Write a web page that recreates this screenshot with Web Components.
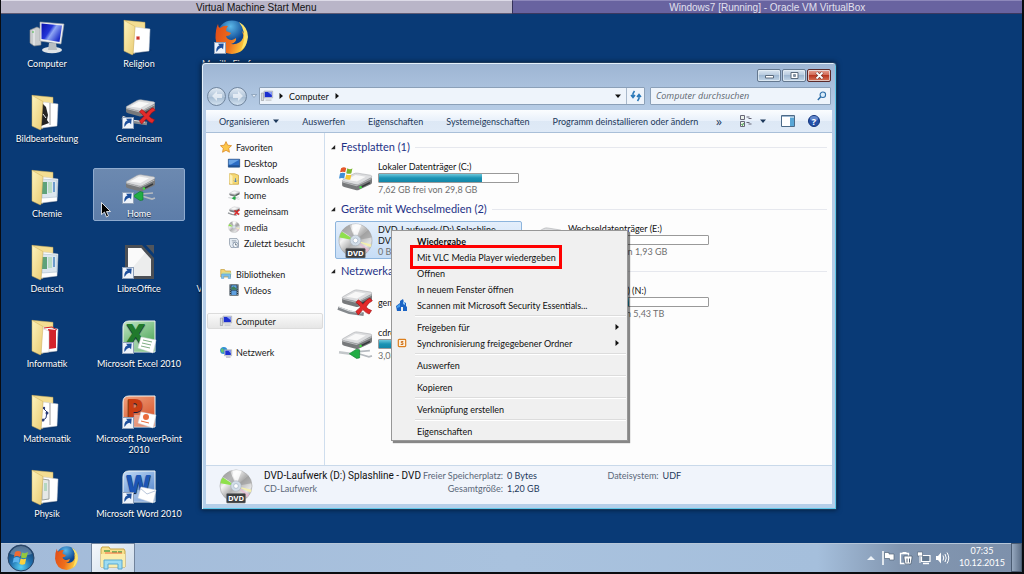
<!DOCTYPE html>
<html lang="de">
<head>
<meta charset="utf-8">
<title>Windows7 [Running] - Oracle VM VirtualBox</title>
<style>
  html, body { margin: 0; min-height: 100%; background: #0a0c10; }
  body { font: 9px/11px Lato, "Open Sans", sans-serif; color: #111; }
</style>
</head>
<body>
<vm-screen></vm-screen>

<script>
const SHORTCUT = `<rect x=".5" y="22.500" width="11" height="11" fill="#eef3fa" stroke="#8fa0b8"/>
  <path d="M2.500 32c-.6-3.500.8-6 3-6.500L4 23.800l5.700-.3-.6 5.700-1.600-1.500c-2 .4-3.500 1.800-5 4.300z" fill="#1d4f9c"/>`;
const folder = inner => `<svg viewBox="0 0 34 34">
  <defs><linearGradient id="f" x2="1" y2="1"><stop offset="0" stop-color="#fdf3bd"/><stop offset="1" stop-color="#e9cb72"/></linearGradient></defs>
  <path d="M20 27l10 3-6 3-10 1z" fill="#052a5c" opacity=".5"/>
  <path d="M2 .3l21 2V8L12 34z" fill="#f3dd92" stroke="#c9ab58" stroke-width=".5"/>
  <path d="M13 7l15 2-1 22-16 2z" fill="#fff" stroke="#c8ccd2" stroke-width=".5"/>${inner}
  <path d="M2 .3L13 6.500 11 34.500l-1 .3L2 31z" fill="url(#f)" stroke="#cfae58" stroke-width=".5"/></svg>`;
const driveBody = `<path d="M4 13v3.500q0 1.200 2 1.700l11 3q2 .5 3.500-.3l11-5q1.500-.8 1.500-2V9z" fill="#77797b"/>
  <path d="M4.500 11.500L15 5.500q2-1 4-.7l12.500 2q2.500.7.7 2.200L20.500 15.500q-1.500.8-3.500.4L5 13q-1.700-.6-.5-1.500z" fill="#dcdddf" stroke="#a0a3a6" stroke-width=".5"/>
  <path d="M8 11.500l9-5 10 1.800-8.500 4.700z" fill="#f8f8f8"/><path d="M4.500 13.500l13.500 3.500 14.500-7" stroke="#b9bbbd" fill="none"/><path d="M22 18.500l9-4.500" stroke="#36393c" stroke-width="1.500"/><circle cx="22" cy="18.500" r="1.200" fill="#3fdc3f"/>`;
const redX = `<g transform="translate(9 5) scale(.76 .86)"><path d="M14 11q3 1 6 5 5-6 9-7l3 3q-5 2-8 7 3 3 7 4l-3 4q-4-1-8-5-3 3-6 6l-3-4q3-2 6-5-3-4-6-5z" fill="#e32a2a" stroke="#9e0f14" stroke-width=".8"/></g>`;
const greenCable = `<path d="M1 24.500l11 1.500" stroke="#c3c7ca" stroke-width="2.500"/><path d="M20 26l10 3 3-1M20 24l11-1" stroke="#b6bbc0" stroke-width="1.700" fill="none"/><path d="M11 26l7-4.500 3 .7V30l-3 .5z" fill="#22ad45" stroke="#0c7a2a" stroke-width=".6"/>`;
const greyCable = `<path d="M0 22.500l11 4 14 2" stroke="#85898d" stroke-width="3.500" fill="none"/><path d="M1 21.500l10 3.700 12 2" stroke="#dfe2e4" fill="none"/>`;
const officeTile = (c1, c2, letter, fs, color, extra) => `<svg viewBox="0 0 34 34">
  <defs><linearGradient id="o" y2="1" x2=".6"><stop offset="0" stop-color="${c1}"/><stop offset="1" stop-color="${c2}"/></linearGradient></defs>
  <path d="M7 1h26v31H1V7q0-6 6-6z" fill="url(#o)" stroke="#f4f7f4"/>
  <path d="M12 20h20v11H12z" fill="#fff" opacity=".35"/>
  <text x="4" y="23" font-family="Open Sans, sans-serif" font-weight="800" font-size="${fs}" fill="${color}">${letter}</text>
  <path d="M19 17l15 3-3 13-15-5z" fill="#fff" stroke="#d5d9dc" stroke-width=".5"/>${extra}${SHORTCUT}</svg>`;
const firefox = sc => `<svg viewBox="0 0 34 34"><defs>
  <radialGradient id="b" cx=".45" cy=".2"><stop offset="0" stop-color="#5cb8e8"/><stop offset="1" stop-color="#0b4592"/></radialGradient>
  <linearGradient id="r" x2="1" y2=".3"><stop offset="0" stop-color="#e04a18"/><stop offset=".6" stop-color="#ee6f1c"/><stop offset="1" stop-color="#fbc83c"/></linearGradient></defs>
  <circle cx="18" cy="15.500" r="15" fill="url(#b)"/>
  <path d="M4 4q0 3 2 4 4-3 8-2-2 2-2 5l5 2q-1 3-5 3 1 4 6 4 3-1 4-2 1 4-5 6 9 1 12-6 1-3-1-7 5 4 5 10-2 12-15 13Q3 33 1.500 18 1.500 9 4 4z" fill="url(#r)"/>
  <path d="M25 2q9 5 9 15-1 9-7 13 4-9 3-17-1-6-5-11z" fill="#fde36a"/>${sc}</svg>`;
const disc = badge => `<svg viewBox="0 0 36 36"><defs><linearGradient id="d" x2="1" y2="1"><stop offset="0" stop-color="#8e8e8e"/><stop offset=".3" stop-color="#f4f4f4"/><stop offset=".5" stop-color="#b2b2b2"/><stop offset=".75" stop-color="#e4e4e4"/><stop offset="1" stop-color="#7c7c7c"/></linearGradient></defs>
  <circle cx="18" cy="18" r="17" fill="url(#d)" stroke="#a2a2a2" stroke-width=".6"/>
  <path d="M18 18L4 8q3-4 8-6z" fill="#9a9a9a" opacity=".7"/><path d="M18 18L1.500 15q.5-4 2.500-6z" fill="#8fe04c"/><path d="M18 18l14 9-2 3z" fill="#e7b8cf" opacity=".8"/><path d="M18 18l16.500 4-1 3z" fill="#f4efae"/><path d="M18 18L14 1.500q6-1 10 .5z" fill="#fff" opacity=".8"/><path d="M18 18L31 7q3 4 3.500 8z" fill="#8c8c8c" opacity=".5"/>
  <circle cx="18" cy="18" r="5.500" fill="#d2dde8" stroke="#a6afb9" stroke-width=".6"/><circle cx="18" cy="18" r="2.500" fill="#fff" stroke="#9fb1c2" stroke-width=".7"/>
  ${badge ? `<rect x="8" y="26" width="20" height="10" rx="1" fill="#3c3e40" stroke="#77797b" stroke-width=".6"/><text x="18" y="34" text-anchor="middle" font-family="Open Sans, sans-serif" font-weight="700" font-size="8" fill="#fff">DVD</text>` : ''}</svg>`;

const ICONS = {
  computer: `<svg viewBox="0 0 34 34"><defs><linearGradient id="s" x2="1" y2=".6"><stop offset="0" stop-color="#0a10a8"/><stop offset=".45" stop-color="#2335d8"/><stop offset=".6" stop-color="#8fa6f4"/><stop offset="1" stop-color="#1a2cc8"/></linearGradient></defs>
    <path d="M0 10l7-3 4 2v16l-7 1-4-3z" fill="#c9ccce" stroke="#83888c" stroke-width=".6"/><path d="M4 10v15" stroke="#f5f6f7"/><circle cx="3" cy="12" r=".8" fill="#38b838"/>
    <ellipse cx="22" cy="30" rx="10" ry="3.300" fill="#dfe3e6"/><path d="M19 23h7l1 7h-9z" fill="#b9bec2"/>
    <path d="M10 2l24 2-3 20-21-3z" fill="#eef0f2" stroke="#9aa0a6" stroke-width=".6"/><path d="M11.500 3.500L32 5.500 29.500 22 11.500 19z" fill="url(#s)"/></svg>`,
  fReligion: folder(`<path d="M14 16h4v4h-4z" fill="#f3b5ae"/><circle cx="16" cy="18" r="1.500" fill="#c8332c"/>`),
  fBild: folder(`<path d="M20 8v22" stroke="#999"/><path d="M12 8l4 4 2 8-1 5 2 3-8 3z" fill="#252525"/><path d="M13 19l3 4" stroke="#eee"/>`),
  fChemie: folder(`<path d="M12 9l15 1v17l-15 1z" fill="#dce6ee" stroke="#9fb4c4" stroke-width=".5"/><path d="M12 12h5v12h-5z" fill="#5fa27a"/><path d="M18 12h4v11h-4z" fill="#b9dcc4"/><path d="M24 12v10" stroke="#6d9ccc" stroke-width="2"/>`),
  fInfo: folder(`<path d="M18 9l8 1v18l-7 1z" fill="#d3232b"/><path d="M14 8l8-1 5 3" stroke="#d3232b" fill="none"/><path d="M11 8l8 3v21l-8 1z" fill="#fff" stroke="#bbb" stroke-width=".5"/>`),
  fMathe: folder(`<path d="M20 8v22" stroke="#999"/><path d="M13 13l4 4-1 6-4 3" stroke="#2d3e78" fill="none"/><g fill="#2d3e78"><circle cx="14" cy="13" r="1.200"/><circle cx="17" cy="18" r="1.500"/><circle cx="13" cy="25" r="1.500"/></g>`),
  fPhysik: folder(`<path d="M12 9l7 1v19l-7 1z" fill="#e5e8e6" stroke="#9ba19e"/><path d="M14 13h3v8h-3z" fill="#b5d7c0"/>`),
  netX: `<svg viewBox="0 0 34 34">${greyCable}${driveBody}${redX}</svg>`,
  netXS: `<svg viewBox="0 0 34 34">${greyCable}${driveBody}${redX}${SHORTCUT}</svg>`,
  net: `<svg viewBox="0 0 34 34">${driveBody}${greenCable}</svg>`,
  netS: `<svg viewBox="0 0 34 34">${driveBody}${greenCable}${SHORTCUT}</svg>`,
  hdd: `<svg viewBox="0 0 34 34"><g transform="translate(0 7)">${driveBody}</g><g transform="translate(2 5)"><path d="M1 2q3-2 5 0l-1 4q-2-1-5 0z" fill="#e4572a"/><path d="M7 2q3 2 5 0l-1 5q-2 1-5 0z" fill="#7cb82f"/><path d="M0 7q3-1 5 0l-1 5q-2-1-5 0z" fill="#3f8fd6"/><path d="M6 8q3 1 5 0l-1 5q-2 1-5-1z" fill="#f7c62f"/></g></svg>`,
  libre: `<svg viewBox="0 0 34 34"><path d="M3 0h17l12 13v21H3z" fill="#4b4f55"/><path d="M24 0h8v9z" fill="#50555c"/><path d="M6 3h13l10 11v17H6z" fill="#eceded"/><path d="M6 3h13l4 5L6 28z" fill="#fafafa"/>${SHORTCUT}</svg>`,
  excel: officeTile('#c4e6c6', '#4aa556', 'X', 27, '#217a2c', `<g stroke="#7fae84"><path d="M21 20l9 2M20 23l9 2M19 26l9 2"/></g>`),
  ppt: officeTile('#f0a27f', '#d6552c', 'P', 27, '#c93d12', `<circle cx="24" cy="22" r="3" fill="#e96c3c"/><path d="M19 26l8 2" stroke="#e96c3c"/>`),
  word: officeTile('#c4dcf6', '#4f83cc', 'W', 24, '#1c55b5', `<path d="M18 18l7 6 8-3" stroke="#b9c6da" fill="none"/>`),
  firefox: firefox(''), firefoxS: firefox(SHORTCUT),
  vlc: `<svg viewBox="0 0 34 34"><path d="M14 2h6l8 26H6z" fill="#f08a1c"/></svg>`,
  dvd: disc(true), disc: disc(false),
  star: `<svg viewBox="0 0 16 16"><path d="M8 .8l2.200 4.800 5.200.6-3.800 3.600 1 5.200L8 12.400 3.400 15l1-5.200L.6 6.200l5.200-.6z" fill="#fcc64a" stroke="#d9861c"/></svg>`,
  desk: `<svg viewBox="0 0 16 16"><path d="M.5 3h15v10.500H.5z" fill="#2b6cc4" stroke="#1b4478"/><path d="M1 3.500h14L4 10H1z" fill="#6ba5e6"/><path d="M1 12h14" stroke="#123a6b"/></svg>`,
  down: `<svg viewBox="0 0 16 16"><path d="M2 1h7l5 2v12H2z" fill="#f4d874" stroke="#c9a23e"/><path d="M2 1l4 3v11l-4-1z" fill="#fdf0b5"/><path d="M10 7v5M8 10l2 2 2-2" stroke="#2f72c8" fill="none"/></svg>`,
  recent: `<svg viewBox="0 0 16 16"><path d="M2 2h10l2 3v9H4L2 10z" fill="#e4ebf2" stroke="#8e9aa8"/><path d="M5 5h6M6 7h5" stroke="#8e9aa8"/><circle cx="10" cy="10.500" r="3.500" fill="#f8fafc" stroke="#7688a0"/><path d="M10 8.500v2h2" stroke="#456" fill="none"/></svg>`,
  lib: `<svg viewBox="0 0 16 16"><path d="M1 2h5l1 2h7v8H1z" fill="#f2d476" stroke="#c8a448"/><path d="M3 6h12v3H3z" fill="#bfe0a6"/><path d="M2 14V8h12v6h-3v-3H5v3z" fill="#7fc0ea" stroke="#4a8fc4" stroke-width=".6"/></svg>`,
  video: `<svg viewBox="0 0 16 16"><path d="M2 .5h12v15H2z" fill="#22303c"/><path d="M4.500 1.500h7v6h-7zM4.500 8.500h7v6h-7z" fill="#5fa0e0"/><path d="M4.500 5l3-2 4 3v1.500h-7z" fill="#3f7f58"/><path d="M3.200 1v15M12.800 1v15" stroke="#dfe8ee" stroke-dasharray="1 1.500"/></svg>`,
  pc: `<svg viewBox="0 0 16 16"><path d="M.5 4h3v10h-3z" fill="#d6d9dc" stroke="#868b90" stroke-width=".7"/><path d="M4 1.500h11.500v9H4z" fill="#e6e9ee" stroke="#8a9099" stroke-width=".7"/><path d="M5 2.500h9.500v7H5z" fill="#1c2fd0"/><path d="M9 2.500h5.500V7z" fill="#8ea2f4"/><path d="M6 12.500h8v2H6z" fill="#c8ccd1"/></svg>`,
  netw: `<svg viewBox="0 0 16 16"><circle cx="5" cy="6" r="4.800" fill="#2f8ed6"/><path d="M2 3q3 0 3 3T3 9Q0 7 2 3z" fill="#63c56a"/><path d="M6 5h9.500v8H6z" fill="#e6e9ee" stroke="#8a9099" stroke-width=".7"/><path d="M7 6h7.500v6H7z" fill="#1c2fd0"/><path d="M11 6h3.500v4z" fill="#8ea2f4"/><path d="M8 14h6v1.500H8z" fill="#aab"/></svg>`,
  tri: `<svg viewBox="0 0 6 6"><path d="M5 0v5H0z" fill="#222"/></svg>`,
  down3: `<svg viewBox="0 0 6 6"><path d="M0 1.500h6L3 5z" fill="currentColor"/></svg>`,
  right3: `<svg viewBox="0 0 6 6"><path d="M1.500 0v6L5 3z" fill="currentColor"/></svg>`,
  hollow: `<svg viewBox="0 0 6 6"><path d="M.5 1.500h5L3 4.500z" fill="#e4edf6" stroke="#7d93ad" stroke-width=".7"/></svg>`,
  refresh: `<svg viewBox="0 0 12 12"><path d="M4.500 1L3 3.500V7M1 5l2 2.500L5 5M7.500 11L9 8.500V5M7 7l2-2.500L11 7" fill="none" stroke="#2a78b8" stroke-width="1.500"/></svg>`,
  loupe: `<svg viewBox="0 0 12 12"><circle cx="7" cy="4.500" r="3.300" fill="#d9ecfa" stroke="#2d6ea8" stroke-width="1.300"/><path d="M4.500 7L1 10.800" stroke="#2d6ea8" stroke-width="1.800"/></svg>`,
  view: `<svg viewBox="0 0 12 12"><path d="M.5.500h4v4h-4zM.5 6.500h4v5h-4z" fill="#eaf1ea" stroke="#667"/><path d="M1.500 9l1 1.500 1-2.500" stroke="#3f9a3f" fill="none"/><path d="M6.500 2h3M8.500 3.500h3M6.500 7.500h3M8.500 9h3" stroke="#667"/></svg>`,
  pane: `<svg viewBox="0 0 14 12"><path d="M.5.5h13v11H.5z" fill="#fff" stroke="#4c6a88"/><path d="M1 1.500h12" stroke="#9db8d2"/><path d="M9 2.500h4V11H9z" fill="#58a6d6"/></svg>`,
  help: `<svg viewBox="0 0 12 12"><circle cx="6" cy="6" r="5.500" fill="#2350a8" stroke="#14357c"/><ellipse cx="6" cy="3.500" rx="4" ry="2.500" fill="#7fa0dc" opacity=".7"/><text x="6" y="9.500" text-anchor="middle" font-family="Open Sans, sans-serif" font-weight="700" font-size="9" fill="#fff">?</text></svg>`,
  min: `<svg viewBox="0 0 9 7"><path d="M.5 3.500h8v2.500h-8z" fill="#fff" stroke="#5b6b7c"/></svg>`,
  max: `<svg viewBox="0 0 9 7"><path d="M1 .5h7v6H1z" fill="#fff" stroke="#5b6b7c"/><path d="M3.500 2.500h2v2h-2z" fill="#7e93a8" stroke="#5b6b7c" stroke-width=".6"/></svg>`,
  close: `<svg viewBox="0 0 9 7"><path d="M1.500.5l6 6M7.500.5l-6 6" stroke="#5a2d2a" stroke-width="3"/><path d="M1.500.5l6 6M7.500.5l-6 6" stroke="#fff" stroke-width="1.800"/></svg>`,
  arrowL: `<svg viewBox="0 0 12 12"><path d="M6 1L1 6l5 5V8h5V4H6z" fill="#f1f6fb" opacity=".75"/></svg>`,
  arrowR: `<svg viewBox="0 0 12 12"><path d="M6 1l5 5-5 5V8H1V4h5z" fill="#f1f6fb" opacity=".75"/></svg>`,
  mse: `<svg viewBox="0 0 12 12"><path d="M0 7l4-3V2l3-2 1 3 2 1v3l1 1v4H7V8L5 8v4H1z" fill="#1a63c4"/><path d="M1 7l3-2v3l-3 1z" fill="#49a0ee"/><path d="M7 2l2 2v2L7 5z" fill="#8cc4f4"/></svg>`,
  sync: `<svg viewBox="-2 -2 14 14"><rect x=".7" y=".7" width="8.600" height="8.600" rx="1" fill="#fdf0dc" stroke="#dc7f1e" stroke-width="1.400"/><path d="M6.500 3.300H4.200v1.500h1.900v1.900H3.500" fill="none" stroke="#c9640c" stroke-width="1.100"/></svg>`,
  orb: `<svg viewBox="0 0 28 28"><defs><radialGradient id="g" cx=".5" cy=".85" r=".8"><stop offset="0" stop-color="#58d0f4"/><stop offset=".5" stop-color="#1f6fae"/><stop offset="1" stop-color="#163c66"/></radialGradient></defs>
    <circle cx="14" cy="14" r="13" fill="url(#g)" stroke="#2b4566"/><path d="M3 10q3-8 11-8t11 8q-11 4-22 0z" fill="#fff" opacity=".28"/>
    <path d="M8 8q3-2 6 0l-1 5q-3-2-6 0z" fill="#ee6a32"/><path d="M15 8.500q3 1.500 6-.5l-1.500 5.500q-2.500 1.500-5.500 0z" fill="#93c83d"/><path d="M6.700 14q3-2 6 0l-1 5q-3-2-6 0z" fill="#5cb3ee"/><path d="M13.700 14.500q3 1.500 5.500 0L18 20q-3 1.500-5.600-.3z" fill="#fdd23e"/></svg>`,
  explorer: `<svg viewBox="0 0 26 24"><path d="M1 3l1-2h7l1 2h14l1 2v16H1z" fill="#f6e08c" stroke="#c9a547"/><path d="M4 5h6M12 6h5M18 6h4" stroke="#5b9e4c" stroke-width="1.500"/><path d="M5 7h17" stroke="#f5704a"/><path d="M1 8h24v13H1z" fill="#fbedac"/><path d="M4 23v-9h18v9h-4v-5H8v5z" fill="#9ddcf3" stroke="#5aa9cf"/></svg>`,
  chev: `<svg viewBox="0 0 8 6"><path d="M0 5l4-4 4 4z" fill="#eef3f8"/></svg>`,
  flag: `<svg viewBox="0 0 14 14"><path d="M2 0v14" stroke="#fff" stroke-width="1.500"/><path d="M3.500 1.500H8v1.500h5v6H8.500V7.500h-5z" fill="#fff" stroke="#536579" stroke-width=".7"/></svg>`,
  clip: `<svg viewBox="0 0 14 14"><path d="M1.500 2.500h8v10h-8z" fill="none" stroke="#fff" stroke-width="1.300"/><path d="M3.500 1h4v2h-4z" fill="#fff"/><path d="M5 5h8v2l-1 6H6L5 7z" fill="#fff" stroke="#4e5f74" stroke-width=".8"/><path d="M8 7.500v4M10.500 7.500v4" stroke="#4e5f74"/></svg>`,
  lan: `<svg viewBox="0 0 14 14"><path d="M4.500 4.500h8.500v6H4.500z" fill="#667b92" stroke="#fff" stroke-width="1.200"/><path d="M6 12.500h6" stroke="#fff" stroke-width="1.500"/><path d="M.5 1h5v4h-5z" fill="#fff" stroke="#4e5f74" stroke-width=".6"/><path d="M3 5v7" stroke="#fff"/></svg>`,
  sound: `<svg viewBox="0 0 14 14"><path d="M1 5h2l3-3.500v11L3 9H1z" fill="#fff"/><path d="M8 4.500q1.500 2.500 0 5M10 3q2.500 4 0 8M12 1.500q3.500 5.500 0 11" stroke="#fff" fill="none"/></svg>`,
  cursor: `<svg viewBox="0 0 10 16"><path d="M.5.500v12l3-2.500 2 5 2-1-2-4.500h4z" fill="#000" stroke="#fff" stroke-width=".8"/></svg>`
};

function define(name, css, html) {
  customElements.define(name, class extends HTMLElement {
    connectedCallback() {
      if (this.shadowRoot) return;
      const root = this.attachShadow({ mode: 'open' });
      const attr = k => this.getAttribute(k);
      root.innerHTML = `<style>:host,*{box-sizing:border-box}button{font:inherit;color:inherit;border:0;background:none;padding:0;margin:0;text-align:inherit}${css}</style>` +
        (typeof html === 'function' ? html(attr) : html);
    }
  });
}

define('win-icon', `:host{display:block;flex:none;width:var(--w,12px);height:var(--h,var(--w,12px))} svg{display:block;width:100%;height:100%;overflow:visible}`,
  a => ICONS[a('name')]);

define('vm-tabs', `:host{display:grid;grid-template-columns:1fr 1fr;height:14px;font:10px/13px "Liberation Sans",Arial,sans-serif;text-align:center}
  span{border-top:1px solid #dddbe8;border-bottom:1px solid #5f5b74;background:#b9b5c8;color:#111;overflow:hidden}
  span:last-child{border-top-color:#8d88bb;border-bottom-color:#3c3960;background:#6863a0;color:#e2e1ee;border-left:1px solid #34325a}`,
  `<span>Virtual Machine Start Menu</span><span>Windows7 [Running] - Oracle VM VirtualBox</span>`);

define('desktop-icon', `:host{display:block;height:75px}
  button{display:flex;flex-direction:column;align-items:center;gap:4px;width:100%;padding:1px 0;text-align:center;color:#fff;text-shadow:0 1px 1px #001330;border:1px solid transparent;border-radius:2px}
  :host([selected]) button{background:linear-gradient(#6c89b0,#5d7da9);border-color:#8fabcf}
  win-icon{--w:34px} span{white-space:nowrap} :host([wrap]) span{white-space:normal}`,
  a => `<button type="button"><win-icon name="${a('icon')}"></win-icon><span><slot></slot></span></button>`);

define('nav-link', `:host{display:block}
  a{display:flex;align-items:center;gap:4px;height:16px;padding-left:20px;color:#1a1a1a;text-decoration:none;border:1px solid transparent;border-radius:2px}
  :host([head]) a{padding-left:12px}
  :host([current]) a{border-color:#dcdcdc;background:linear-gradient(#fafafa,#e6e6e6)}`,
  a => `<a href="#"><win-icon name="${a('icon')}"></win-icon><slot></slot></a>`);

define('drive-group', `:host{display:block}
  h2{display:flex;align-items:center;gap:5px;margin:0 0 4px;font-size:11px;line-height:16px;font-weight:400;color:#1e3287;white-space:nowrap}
  h2 win-icon{--w:5px} h2::after{content:"";flex:1;height:1px;background:#e6e8ee}
  div{display:grid;grid-template-columns:187px 187px;gap:4px 3px;padding:0 0 4px 4px}`,
  a => `<h2><win-icon name="tri"></win-icon>${a('label')}</h2><div><slot></slot></div>`);

define('drive-tile', `:host{display:flex;align-items:center;gap:5px;height:38px;padding:0 2px;border:1px solid transparent;border-radius:2px;overflow:hidden}
  :host([selected]){background:linear-gradient(#e4effb,#c6ddf6);border-color:#8db5dd}
  win-icon{--w:35px} .t{flex:1;min-width:0} .size{color:#6f6f6f;white-space:nowrap}
  .bar{width:141px;height:10px;margin:1px 0;border:1px solid #9a9a9a;border-radius:1px;background:#fff}
  .bar i{display:block;height:100%;width:var(--fill);background:linear-gradient(#6cc8dc,#1b93b4 50%,#1487a8)}
  :host(:not([fill])) .bar{display:none} `,
  a => `<win-icon name="${a('icon')}"></win-icon><div class="t"><div><slot></slot></div>
    <div class="bar" style="--fill:${a('fill')}"><i></i></div>${a('size') ? `<div class="size">${a('size')}</div>` : ''}</div>`);

define('menu-item', `:host{display:block;position:relative}
  button{display:flex;align-items:center;width:100%;height:16px;color:#111}
  .i{width:24px;display:flex;padding-left:3px} .i win-icon{--w:12px} span{flex:1;white-space:nowrap}
  .sub{--w:6px;margin-right:6px} :host([strong]) span{font-weight:700}
  :host([marked])::after{content:"";position:absolute;inset:-4px 64px -4px 17px;border:3px solid #f00;z-index:1;pointer-events:none}`,
  a => `<button type="button" role="menuitem"><div class="i">${a('icon') ? `<win-icon name="${a('icon')}"></win-icon>` : ''}</div><span><slot></slot></span>${a('sub') !== null ? '<win-icon class="sub" name="right3"></win-icon>' : ''}</button>`);

define('context-menu', `:host{display:block;padding:2px 1px 1px;background:#f0f0f0;border:1px solid #979797;box-shadow:2px 2px 1px #0007}
  hr{height:6px;margin:0 0 0 22px;border:0;background:linear-gradient(#dcdcdc,#dcdcdc) 0 2px/100% 1px no-repeat,linear-gradient(#fff,#fff) 0 3px/100% 1px no-repeat}`,
  `<div role="menu">
    <menu-item strong>Wiedergabe</menu-item>
    <menu-item marked>Mit VLC Media Player wiedergeben</menu-item>
    <menu-item>Öffnen</menu-item>
    <menu-item>In neuem Fenster öffnen</menu-item>
    <menu-item icon="mse">Scannen mit Microsoft Security Essentials...</menu-item><hr>
    <menu-item sub>Freigeben für</menu-item>
    <menu-item icon="sync" sub>Synchronisierung freigegebener Ordner</menu-item><hr>
    <menu-item>Auswerfen</menu-item><hr>
    <menu-item>Kopieren</menu-item><hr>
    <menu-item>Verknüpfung erstellen</menu-item><hr>
    <menu-item>Eigenschaften</menu-item>
  </div>`);

define('window-caption', `:host{display:block;height:47px}
  .c{display:flex;justify-content:flex-end;gap:1px;padding:6px 1px 5px 0}
  .c button{display:grid;place-items:center;width:24px;height:13px;border:1px solid #64788f;border-radius:2px;background:linear-gradient(#dbe6f1,#b4c8dd 50%,#9fb8d2 50%,#c3d6e8);box-shadow:inset 0 0 0 1px #e8f1f8aa}
  .c button:last-child{background:linear-gradient(#e7a293,#cf6551 50%,#b83722 50%,#d97558);border-color:#5b2a2a}
  .c win-icon{--w:9px;--h:7px}
  .n{display:flex;align-items:center;height:18px;padding-right:1px}
  .round{display:grid;place-items:center;width:19px;height:19px;border:1px solid #70859e;border-radius:50%;background:linear-gradient(#dfe9f3,#b3c6da 50%,#a2b9d0 50%,#d3e2f0);margin:0 1px}
  .hist{--w:6px;margin:0 2px 0 3px}
  .addr,.find{display:flex;align-items:center;height:18px;border:1px solid #8ba0b8;background:#eef4fb;border-radius:1px}
  .addr{flex:1;color:#111} .addr>win-icon{margin-left:1px} .addr .s{--w:6px;margin:0 5px}
  .addr .r{display:grid;place-items:center;width:18px;height:100%;border-left:1px solid #a9b9cb}
  .find{width:181px;margin-left:5px;padding:0 3px 0 5px}
  input{flex:1;min-width:0;border:0;padding:0;background:none;font:italic 9px/16px "Open Sans",sans-serif;outline:0} input::placeholder{color:#5d6670;opacity:1}
  .find win-icon{--w:10px}`,
  `<div class="c"><button type="button" aria-label="Minimieren"><win-icon name="min"></win-icon></button><button type="button" aria-label="Maximieren"><win-icon name="max"></win-icon></button><button type="button" aria-label="Schließen"><win-icon name="close"></win-icon></button></div>
   <div class="n"><button type="button" class="round" aria-label="Zurück"><win-icon name="arrowL"></win-icon></button><button type="button" class="round" aria-label="Vorwärts"><win-icon name="arrowR"></win-icon></button><win-icon class="hist" name="hollow"></win-icon>
   <div class="addr"><win-icon name="pc"></win-icon><win-icon class="s" name="right3"></win-icon><button type="button">Computer</button><win-icon class="s" name="right3"></win-icon><span style="flex:1"></span><win-icon style="--w:6px;margin-right:5px" name="down3"></win-icon><button type="button" class="r" aria-label="Aktualisieren"><win-icon name="refresh"></win-icon></button></div>
   <label class="find"><input type="text" aria-label="Computer durchsuchen" placeholder="Computer durchsuchen"><win-icon name="loupe"></win-icon></label></div>`);

define('command-bar', `:host{display:flex;align-items:center;height:23px;padding:0 12px 0 13px;background:linear-gradient(#fbfdff,#e8f0fa 50%,#dde8f5 50%,#dfeaf7);border-bottom:1px solid #a9bfd8;color:#1e395b;white-space:nowrap}
  button{display:flex;align-items:center;gap:4px;margin-right:23px} .d{--w:6px} i{flex:1} .more{margin-right:18px;font:12px "Open Sans",sans-serif} .v{gap:8px;margin-right:15px} .p{margin-right:13px} .p win-icon{--w:14px;--h:12px} .h{margin:0}`,
  `<button type="button">Organisieren <win-icon class="d" name="down3"></win-icon></button><button type="button">Auswerfen</button><button type="button">Eigenschaften</button><button type="button">Systemeigenschaften</button><button type="button" style="margin:0">Programm deinstallieren oder ändern</button><i></i>
  <button type="button" class="more">»</button><button type="button" class="v" aria-label="Ansicht"><win-icon name="view"></win-icon><win-icon class="d" name="down3"></win-icon></button><button type="button" class="p" aria-label="Vorschau"><win-icon name="pane"></win-icon></button><button type="button" class="h" aria-label="Hilfe"><win-icon name="help"></win-icon></button>`);

define('nav-pane', `:host{display:flex;flex-direction:column;gap:15px;padding:6px 1px;border-right:1px solid #cfdeee;background:#fcfcfd}`,
  `<nav><nav-link head icon="star">Favoriten</nav-link><nav-link icon="desk">Desktop</nav-link><nav-link icon="down">Downloads</nav-link><nav-link icon="net">home</nav-link><nav-link icon="netX">gemeinsam</nav-link><nav-link icon="disc">media</nav-link><nav-link icon="recent">Zuletzt besucht</nav-link></nav>
   <nav><nav-link head icon="lib">Bibliotheken</nav-link><nav-link icon="video">Videos</nav-link></nav>
   <nav><nav-link head current icon="pc">Computer</nav-link></nav>
   <nav><nav-link head icon="netw">Netzwerk</nav-link></nav>`);

define('drive-list', `:host{display:block;padding:6px 5px 0 6px;background:#fdfdfd}`,
  `<drive-group label="Festplatten (1)"><drive-tile icon="hdd" fill="74%" size="7,62 GB frei von 29,8 GB">Lokaler Datenträger (C:)</drive-tile></drive-group>
   <drive-group label="Geräte mit Wechselmedien (2)"><drive-tile selected icon="dvd" size="0 Bytes frei von 1,20 GB">DVD-Laufwerk (D:) Splashline - DVD</drive-tile><drive-tile icon="net" fill="1%" size="1,92 GB frei von 1,93 GB">Wechseldatenträger (E:)</drive-tile></drive-group>
   <drive-group label="Netzwerkadressen (3)"><drive-tile icon="netX">gemeinsam (M:)</drive-tile><drive-tile icon="net" fill="43%" size="3,08 TB frei von 5,43 TB">home (\\\\server) (N:)</drive-tile><drive-tile icon="net" fill="43%" size="3,08 TB frei von 5,43 TB">cdrom (O:)</drive-tile></drive-group>`);

define('details-pane', `:host{display:flex;align-items:flex-start;height:39px;padding:3px 13px 0;background:#f0f4fb;border-top:1px solid #c9d9ea;color:#5a6779;white-space:nowrap}
  win-icon{--w:34px;margin-right:11px} dl{display:grid;grid-template-columns:auto auto;gap:0 4px;margin:0;line-height:13px;align-items:center} dt{text-align:right} dd{margin:0;color:#1e395b}
  .t{line-height:13px;min-width:159px} b{display:block;font:10px/13px Roboto,sans-serif;color:#111} .x{margin-left:68px}`,
  `<win-icon name="dvd"></win-icon><div class="t"><b>DVD-Laufwerk (D:) Splashline - DVD</b>CD-Laufwerk</div>
   <dl><dt>Freier Speicherplatz:</dt><dd>0 Bytes</dd><dt>Gesamtgröße:</dt><dd>1,20 GB</dd></dl><dl class="x"><dt>Dateisystem:</dt><dd>UDF</dd></dl>`);

define('explorer-window', `:host{display:grid;grid-template:auto auto 1fr auto/minmax(0,1fr);padding:0 4px 5px;border:1px solid #1c3a5c;border-radius:4px 4px 1px 1px;background:linear-gradient(#9db5d3,#b5cbe5 45px,#b5cfe9);box-shadow:inset 1px 1px 0 #e3f0fa,inset -1px -1px 0 #5fc8ea,0 0 5px #0008}
  .b{display:grid;grid-template-columns:119px minmax(0,1fr);min-height:0}`,
  `<window-caption></window-caption><command-bar></command-bar><div class="b"><nav-pane></nav-pane><drive-list></drive-list></div><details-pane></details-pane>`);

define('task-bar', `:host{display:flex;align-items:stretch;height:29px;background:linear-gradient(90deg,#a3bbd9,#a9c2de 50%,#a5bfdc 80%,#8296b0 88%,#7d90ab);box-shadow:inset 0 1px 0 #b6c6d8;color:#fff}
  button{display:grid;place-items:center} .o{width:40px;--w:28px} .f{width:50px;--w:24px} .e{width:44px;--w:26px;--h:24px;border:1px solid #70839c;border-bottom:0;background:linear-gradient(135deg,#f4f8fb,#cddbea)}
  .tray{margin-left:auto;display:flex;align-items:center;gap:4px;--w:14px} .tray button:first-child{--w:8px;--h:6px;margin-right:2px}
  time{padding:2px 6px 0 10px;text-align:center;line-height:12px} .s{width:11px;border:1px solid #4b5c72;background:linear-gradient(90deg,#96a8bf,#5f7189)}`,
  `<button type="button" class="o" aria-label="Start"><win-icon name="orb"></win-icon></button><button type="button" class="f" aria-label="Firefox"><win-icon name="firefox"></win-icon></button><button type="button" class="e" aria-label="Explorer"><win-icon name="explorer"></win-icon></button>
   <div class="tray"><button type="button" aria-label="Ausgeblendete Symbole"><win-icon name="chev"></win-icon></button><button type="button" aria-label="Wartungscenter"><win-icon name="flag"></win-icon></button><button type="button" aria-label="Zwischenablage"><win-icon name="clip"></win-icon></button><button type="button" aria-label="Netzwerk"><win-icon name="lan"></win-icon></button><button type="button" aria-label="Lautstärke"><win-icon name="sound"></win-icon></button></div>
   <time>07:35<br>10.12.2015</time><button type="button" class="s" aria-label="Desktop anzeigen"></button>`);

define('vm-screen', `:host{display:grid;grid-template-rows:auto 1fr auto;min-height:100vh;border:solid #0a0c10;border-width:0 2px 2px 1px}
  main{position:relative;background:#093a76;min-height:529px;overflow:hidden}
  .icons{display:grid;grid-template-columns:repeat(3,92px);grid-template-rows:repeat(7,75px);grid-auto-flow:column;padding-top:4px;width:276px}
  .gap{grid-row:4}
  explorer-window{position:absolute;left:200px;top:48px;right:185px;bottom:33px}
  context-menu{position:absolute;left:390px;top:216px;width:237px}
  .cur{position:absolute;left:100px;top:188px;--w:10px;--h:16px}`,
  `<vm-tabs></vm-tabs>
   <main><div class="icons">
     <desktop-icon icon="computer">Computer</desktop-icon><desktop-icon icon="fBild">Bildbearbeitung</desktop-icon><desktop-icon icon="fChemie">Chemie</desktop-icon><desktop-icon icon="fChemie">Deutsch</desktop-icon><desktop-icon icon="fInfo">Informatik</desktop-icon><desktop-icon icon="fMathe">Mathematik</desktop-icon><desktop-icon icon="fPhysik">Physik</desktop-icon>
     <desktop-icon icon="fReligion">Religion</desktop-icon><desktop-icon icon="netXS">Gemeinsam</desktop-icon><desktop-icon selected icon="netS">Home</desktop-icon><desktop-icon icon="libre">LibreOffice</desktop-icon><desktop-icon icon="excel">Microsoft Excel 2010</desktop-icon><desktop-icon wrap icon="ppt">Microsoft PowerPoint 2010</desktop-icon><desktop-icon icon="word">Microsoft Word 2010</desktop-icon>
     <desktop-icon icon="firefoxS">Mozilla Firefox</desktop-icon><desktop-icon class="gap" icon="vlc">VLC media player</desktop-icon>
   </div>
   <explorer-window></explorer-window><context-menu></context-menu><win-icon class="cur" name="cursor"></win-icon></main>
   <task-bar></task-bar>`);
</script>
</body>
</html>
